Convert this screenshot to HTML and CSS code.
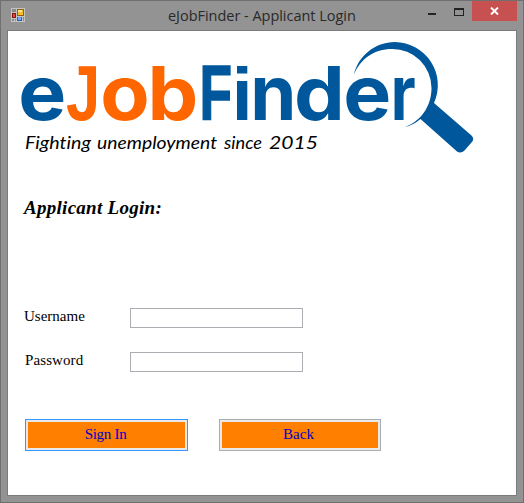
FILE: index.html
```html
<!DOCTYPE html>
<html lang="en">
<head>
<meta charset="utf-8">
<title>eJobFinder - Applicant Login</title>
<link rel="stylesheet" href="styles.css">
</head>
<body>
<div class="window">
  <header class="titlebar">
    <svg class="app-icon" width="14" height="14" viewBox="0 0 14 14" shape-rendering="crispEdges">
      <path fill="#c4c4c4" d="M0 0h14v14H0z"/>
      <path fill="#898989" d="M1 1h4v3H1zM1 11h2v2H1zM4 11h1v2H4zM12 9h1v4h-1z"/>
      <path fill="#8e1511" d="M1 5h4v5H1z"/><path fill="#e64434" d="M2 6h2v3H2z"/>
      <path fill="#946300" d="M6 1h7v7H6z"/><path fill="#f6bd2b" d="M7 2h5v5H7z"/><path fill="#ffe58b" d="M7 2h4v2H7z"/>
      <path fill="#2d62c5" d="M6 9h5v4H6z"/><path fill="#72a7fa" d="M7 9h3v3H7z"/>
    </svg>
    <h1 class="title">eJobFinder - Applicant Login</h1>
    <div class="controls">
      <svg width="48" height="20" viewBox="0 0 48 20" shape-rendering="crispEdges"><path fill="#222" d="M4 12h8v2H4z"/><path fill="none" stroke="#222" d="M30.500 7.500h9v7h-9z"/><path fill="#222" d="M30 7h10v2H30z"/></svg>
      <button class="close" aria-label="Close"><svg width="9" height="8" viewBox="0 0 9 8"><path d="M1 .5l7 7M8 .5l-7 7" stroke="#fff" stroke-width="1.900"/></svg></button>
    </div>
  </header>
  <main class="client">
    <svg class="logo" width="470" height="124" viewBox="16 36 470 124">
      <g class="wordmark">
        <text transform="translate(18.200 120.300) scale(1.120 1.060)">e</text>
        <g class="job">
          <text class="square" transform="translate(66 120.300) scale(.820 1.040)">J</text>
          <text transform="translate(100.200 120.300) scale(1.120 1.060)">o</text>
          <text transform="translate(147.600 120.300) scale(1.120 1.030)">b</text>
        </g>
        <text class="square narrow" transform="translate(199.600 120) scale(.710 1.030)">F</text>
        <text class="square" transform="translate(231.700 120.300)">i</text>
        <text transform="translate(250.300 120.300) scale(1.030 1.060)">n</text>
        <text transform="translate(294.100 120.300) scale(1.120 1.030)">d</text>
        <text transform="translate(343.200 120.300) scale(1.120 1.060)">e</text>
        <text transform="translate(390.700 120.300) scale(.850 1.060)">r</text>
      </g>
      <path class="blue" d="M353.800 75C358 56 375 42 395 42A43.200 43.200 0 0 1 434 103L471.500 135.500Q475 139 471.500 142.500L464.500 150.500Q461 154 457 151.500L420.500 119Q413 125.500 404.500 127C420 122 431.500 107 431.500 88A39 39 0 0 0 392 49C374 49 360 59 353.800 75Z"/>
      <g class="tagline">
        <text x="25" y="149" textLength="66" lengthAdjust="spacingAndGlyphs">Fighting</text>
        <text x="97" y="149" textLength="120" lengthAdjust="spacingAndGlyphs">unemployment</text>
        <text x="224" y="149" textLength="38" lengthAdjust="spacingAndGlyphs">since</text>
        <text x="269" y="149" textLength="49" lengthAdjust="spacingAndGlyphs">2015</text>
      </g>
    </svg>
    <h2 class="heading">Applicant Login:</h2>
    <form class="form">
      <label class="field"><span>Username</span><input type="text"></label>
      <label class="field password"><span>Password</span><input type="password"></label>
      <div class="actions">
        <button class="btn primary" type="button">Sign In</button>
        <button class="btn" type="button">Back</button>
      </div>
    </form>
  </main>
</div>
</body>
</html>
```
FILE: styles.css
```css
* { box-sizing: border-box; }
body { margin: 0; overflow: hidden; }
.window {
  width: 524px; height: 503px;
  display: flex; flex-direction: column;
  padding: 0 6px 6px;
  border: 1px solid #707070;
  background: #939393;
}
.titlebar { height: 29px; flex: none; display: flex; }
.app-icon { margin: 7px 0 0 4px; }
.title { margin: 4px 0 0 143px; font: 14.5px/22px "Open Sans", sans-serif; letter-spacing: -.03px; color: #292929; white-space: nowrap; }
.controls { margin-left: auto; display: flex; }
.close {
  width: 45px; height: 20px; padding: 0; border: 0;
  display: flex; align-items: center; justify-content: center;
  background: #c75050;
}
.client {
  flex: 1;
  display: flex; flex-direction: column; align-items: flex-start;
  padding: 5px 8px;
  border: 1px solid #7b7b7b;
  background: #fff;
}
.logo { flex: none; }
.wordmark { font: 700 72px Inter, sans-serif; fill: #00579b; }
.job { fill: #ff6600; }
.square { font: 700 75px "Liberation Sans", sans-serif; }
.narrow { stroke: #00579b; stroke-width: 1.5px; }
.blue { fill: #00579b; }
.tagline { font: italic 16.5px Lato, sans-serif; font-variant-ligatures: none; fill: #000; }
.heading { margin: 37px 0 0 8px; font: italic bold 19px/22px "Liberation Serif", serif; letter-spacing: .28px; }
.form { margin: 89px 0 0 8px; font: 15px/20px "Liberation Serif", serif; }
.field { display: flex; align-items: center; height: 20px; margin-bottom: 24px; }
.field span { width: 106px; padding-bottom: 4px; }
.password span { padding-left: 1px; letter-spacing: .1px; }
.field input { width: 173px; height: 20px; border: 1px solid #abadb3; background: #fff; outline: 0; }
.actions { display: flex; gap: 31px; margin: 47px 0 0 1px; }
.btn {
  width: 162px; height: 32px; padding: 0 3px 1px 0;
  border: 1px solid #acacac;
  box-shadow: inset 0 0 0 2px #e9e9e9;
  background: #ff8000;
  color: #0000c8; font: 15px "Liberation Serif", serif;
}
.primary { width: 163px; padding-right: 2px; border-color: #3399ff; letter-spacing: -.3px; }
```
